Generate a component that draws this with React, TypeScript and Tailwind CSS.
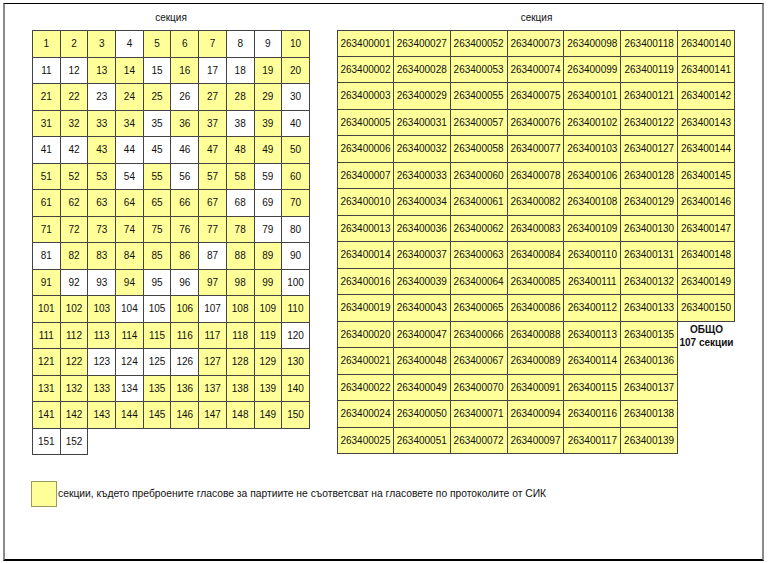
import React from "react";

const YELLOW: number[] = [
  1, 2, 3, 5, 6, 7, 10,
  13, 14, 16, 19, 20,
  21, 22, 24, 25, 27, 28, 29,
  31, 32, 33, 34, 36, 37, 39,
  43, 47, 48, 49, 50,
  51, 52, 53, 55, 57, 58, 60,
  61, 62, 63, 64, 65, 66, 67, 70,
  71, 72, 73, 74, 75, 76, 77, 78,
  82, 83, 84, 85, 86, 88, 89,
  91, 94, 97, 98, 99,
  101, 102, 103, 106, 108, 109, 110,
  111, 112, 113, 114, 115, 116, 117, 118, 119,
  121, 122, 127, 128, 129, 130,
  131, 132, 133, 135, 136, 137, 138, 139, 140,
  141, 142, 143, 144, 145, 146, 147, 148, 149, 150,
];

const ySet = new Set(YELLOW);

export default function App() {
  const left = Array.from({ length: 152 }, (_, i) => i + 1);
  const right = YELLOW.map((n) => "263400" + String(n).padStart(3, "0"));

  return (
    <div className="w-[768px] h-[563px] bg-white font-['Liberation_Sans',Arial,sans-serif] text-[#111] pt-[3px] pl-[3px]">
      <div className="w-[761px] h-[558px] border-t border-b-2 border-l-2 border-r-2 border-t-black border-b-black border-l-[#8a8a8a] border-r-[#8a8a8a] flex flex-col">
        <div className="flex pl-[27px] gap-[27px]">
          <div className="w-[278px] flex flex-col">
            <div className="h-[26px] flex items-center justify-center text-[10px]">секция</div>
            <div className="grid grid-cols-[repeat(10,27.7px)] auto-rows-[26.5px] border-l border-t border-[#444] w-[278px]">
              {left.map((n) => (
                <div
                  key={n}
                  className={
                    "flex items-center justify-center border-r border-b border-[#444] text-[10px] " +
                    (ySet.has(n) ? "bg-[#ffff99]" : "bg-white")
                  }
                >
                  {n}
                </div>
              ))}
            </div>
          </div>
          <div className="w-[399px] flex flex-col">
            <div className="h-[26px] flex items-center justify-center text-[10px]">секция</div>
            <div className="grid grid-flow-col grid-cols-[repeat(7,56.85px)] grid-rows-[repeat(16,26.5px)] w-[399px]">
              {right.map((s, i) => (
                <div
                  key={s}
                  className={
                    "flex items-center justify-center border-r border-b border-[#444] bg-[#ffff99] text-[10px] " +
                    (i < 16 ? "border-l " : "") +
                    (i % 16 === 0 ? "border-t" : "")
                  }
                >
                  {s}
                </div>
              ))}
              <div className="col-start-7 row-start-12 row-span-2 flex flex-col items-center font-bold text-[10px] leading-[13.5px] pt-[1px]">
                <span>ОБЩО</span>
                <span>107 секции</span>
              </div>
            </div>
          </div>
        </div>
        <div className="flex items-center pl-[26px] mt-[26px]">
          <div className="w-[26px] h-[26px] bg-[#ffff99] border border-[#9a9a5a]" />
          <span className="ml-[1px] text-[10.3px]">
            секции, където преброените гласове за партиите не съответсват на гласовете по протоколите от СИК
          </span>
        </div>
      </div>
    </div>
  );
}
